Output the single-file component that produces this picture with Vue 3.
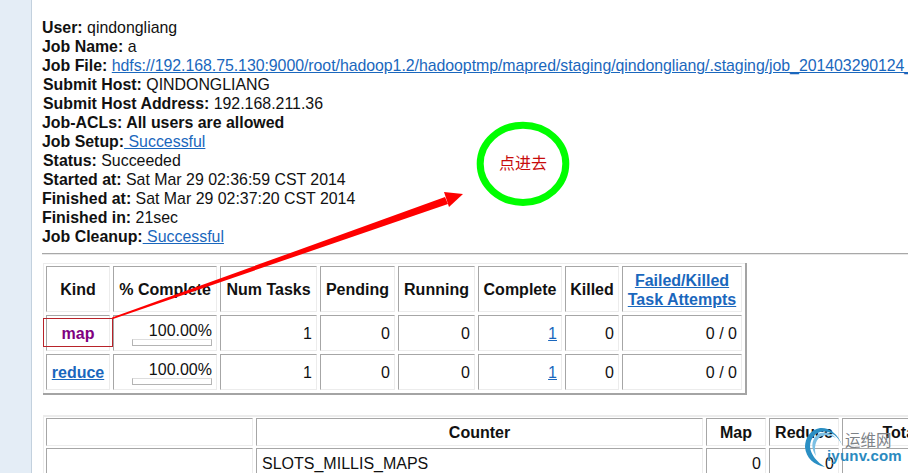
<script setup>
const info = [
  { label: 'User:', value: ' qindongliang' },
  { label: 'Job Name:', value: ' a' },
  { label: 'Job File:', link: 'hdfs://192.168.75.130:9000/root/hadoop1.2/hadooptmp/mapred/staging/qindongliang/.staging/job_201403290124_0001/job.xml', long: true },
  { label: 'Submit Host:', value: ' QINDONGLIANG', shift: true },
  { label: 'Submit Host Address:', value: ' 192.168.211.36', shift: true },
  { label: 'Job-ACLs: All users are allowed' },
  { label: 'Job Setup:', link: ' Successful' },
  { label: 'Status:', value: ' Succeeded', shift: true },
  { label: 'Started at:', value: ' Sat Mar 29 02:36:59 CST 2014', shift: true },
  { label: 'Finished at:', value: ' Sat Mar 29 02:37:20 CST 2014' },
  { label: 'Finished in:', value: ' 21sec' },
  { label: 'Job Cleanup:', link: ' Successful' }
]
const tasks = [
  { kind: 'map', visited: true },
  { kind: 'reduce', visited: false }
]
</script>

<template>
  <div class="page">
    <aside class="rail"></aside>
    <main class="content">
      <div class="info">
        <div v-for="row in info" :key="row.label" class="line" :class="{ shift: row.shift }">
          <b>{{ row.label }}</b><template v-if="row.long">&nbsp;</template><a v-if="row.link" href="#" :class="{ long: row.long }">{{ row.link }}</a><span v-else>{{ row.value }}</span>
        </div>
      </div>
      <hr class="rule" />
      <table class="grid tasks">
        <tbody>
          <tr class="head">
            <th class="c1">Kind</th>
            <th class="c2">% Complete</th>
            <th class="c3">Num Tasks</th>
            <th class="c4">Pending</th>
            <th class="c5">Running</th>
            <th class="c6">Complete</th>
            <th class="c7">Killed</th>
            <th class="c8"><a href="#">Failed/Killed<br />Task Attempts</a></th>
          </tr>
          <tr v-for="t in tasks" :key="t.kind" class="task">
            <td class="kind"><a href="#" :class="{ visited: t.visited }">{{ t.kind }}</a></td>
            <td class="pct">100.00%<div class="bar"></div></td>
            <td>1</td>
            <td>0</td>
            <td>0</td>
            <td><a href="#">1</a></td>
            <td>0</td>
            <td>0 / 0</td>
          </tr>
        </tbody>
      </table>
      <table class="grid counters">
        <tbody>
          <tr class="chead">
            <th class="d1"></th>
            <th class="d2">Counter</th>
            <th class="d3">Map</th>
            <th class="d4">Reduce</th>
            <th class="d5">Total</th>
          </tr>
          <tr class="crow">
            <td></td>
            <td class="name">SLOTS_MILLIS_MAPS</td>
            <td>0</td>
            <td>0</td>
            <td>0</td>
          </tr>
        </tbody>
      </table>
    </main>

    <div class="redbox"></div>
    <svg class="overlay" width="908" height="473" viewBox="0 0 908 473" aria-hidden="true">
      <polygon points="112,317.5 445,197 448,204 113,319" fill="#fe0000" />
      <polygon points="463,194 444,192 449,207" fill="#fe0000" />
      <ellipse cx="523" cy="163.8" rx="42.8" ry="38.6" fill="none" stroke="#00fe00" stroke-width="7" />
      <path d="M842 445 C 838 433 828 427 820 428 C 810 430 805 438 805 447 C 806 458 814 465 825 467 C 817 462 811 455 810 447 C 810 438 816 432 823 431.5 C 831 431 838 436 842 445 Z" fill="#2a8fc4" />
      <path d="M836 438 C 830 432 822 431 817 435 C 811 440 811 449 816 456 C 814 448 815 441 820 437 C 825 434 831 435 836 438 Z" fill="#7cc0e4" />
    </svg>
    <div class="circle-text">点进去</div>
    <div class="mark">
      <span class="mark-cn">运维网</span>
      <span class="mark-en">iyunv.com</span>
    </div>
  </div>
</template>

<style scoped>
.page {
  position: relative;
  width: 908px;
  height: 473px;
  overflow: hidden;
  background: #fff;
  display: flex;
  font-family: "Liberation Sans", Arial, sans-serif;
  font-size: 16px;
  color: #111;
}
.rail {
  flex: 0 0 31px;
  background: #e4edf6;
  border-right: 1px solid #c3d1de;
}
.content {
  flex: 1;
  min-width: 0;
  padding: 18px 0 0 10px;
}
.info {
  white-space: nowrap;
  font-size: 15.9px;
}
.line {
  height: 19px;
  line-height: 19px;
}
.line span,
.line a {
  white-space: pre;
}
.line a.long {
  letter-spacing: -0.05px;
}
.shift {
  padding-left: 1px;
}
a {
  color: #1a67bd;
  text-decoration: underline;
}
.rule {
  margin: 7px 0 0;
  height: 0;
  border: 0;
  border-top: 1px solid #a8a8a8;
  border-bottom: 1px solid #e8e8e8;
}
.grid {
  border-collapse: separate;
  border-spacing: 3px;
  table-layout: fixed;
  border-style: solid;
  border-color: #a4a4a4;
  border-width: 0 2px 2px 0;
  box-shadow: inset 1px 1px 0 #ececec;
  margin-left: 1px;
}
.grid th,
.grid td {
  box-sizing: border-box;
  border: 1px solid;
  border-color: #a6a6a6 #ececec #ececec #a6a6a6;
  padding: 0 4px;
  overflow: hidden;
  white-space: nowrap;
}
.tasks {
  margin-top: 8px;
  width: 704px;
}
.c1 { width: 64px; }
.c2 { width: 104px; }
.c3 { width: 97px; }
.c4 { width: 75px; }
.c5 { width: 77px; }
.c6 { width: 84px; }
.c7 { width: 54px; }
.c8 { width: 120px; }
.head th {
  height: 46px;
  line-height: 19px;
}
.head th.c8 {
  padding-top: 2px;
}
.task td {
  height: 36px;
  padding-top: 2px;
  text-align: right;
}
.task td.kind {
  text-align: center;
  font-weight: bold;
}
.task td.kind a.visited {
  color: #800080;
  text-decoration: none;
}
.task td.pct {
  vertical-align: top;
  line-height: 19px;
  padding-top: 5px;
}
.bar {
  box-sizing: border-box;
  height: 7px;
  width: 80px;
  margin: -1px 0 0 auto;
  border: 1px solid #b4b4b4;
  border-top-color: #ddd;
}
.counters {
  margin-top: 20px;
  width: 922px;
  border-top: 1px solid #ececec;
  border-spacing: 3px 2px;
}
.d1 { width: 207px; }
.d2 { width: 447px; }
.d3 { width: 60px; }
.d4 { width: 70px; }
.d5 { width: 118px; }
.chead th {
  height: 28px;
  padding-top: 2px;
}
.crow td {
  height: 30px;
  padding-top: 2px;
  text-align: right;
}
.crow td.name {
  padding-left: 5px;
  text-align: left;
}
.redbox {
  position: absolute;
  left: 43px;
  top: 318px;
  width: 68px;
  height: 27px;
  border: 1px solid #b8232a;
}
.overlay {
  position: absolute;
  left: 0;
  top: 0;
}
.circle-text {
  position: absolute;
  left: 499px;
  top: 151px;
  font-size: 16px;
  line-height: 22px;
  color: #c80c0c;
  font-family: "Noto Sans CJK SC", sans-serif;
  white-space: nowrap;
}
.mark {
  position: absolute;
  left: 827px;
  top: 428px;
  width: 81px;
  height: 45px;
}
.mark-cn {
  position: absolute;
  left: 18px;
  top: 1px;
  font-size: 15.5px;
  line-height: 20px;
  color: #7d8287;
  font-family: "Noto Sans CJK SC", sans-serif;
  white-space: nowrap;
}
.mark-en {
  position: absolute;
  left: 0;
  top: 19px;
  font-size: 15px;
  line-height: 17px;
  font-weight: bold;
  color: #2a8ac0;
  white-space: nowrap;
  letter-spacing: 0.2px;
}
</style>
